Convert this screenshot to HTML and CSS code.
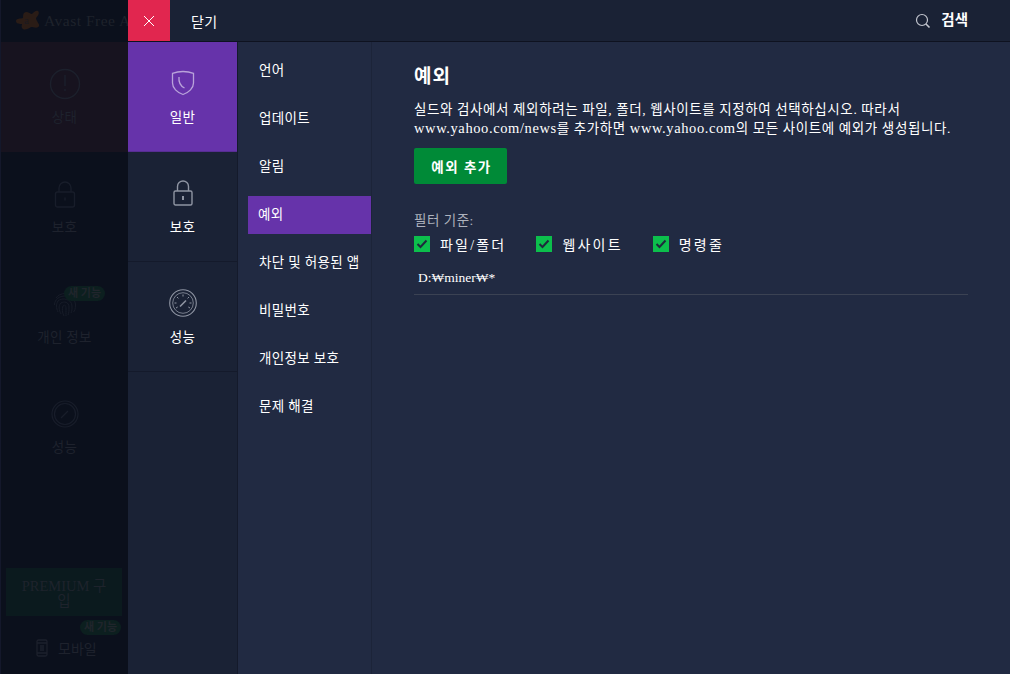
FILE: index.html
```html
<!DOCTYPE html>
<html lang="ko">
<head>
<meta charset="utf-8">
<title>Avast Free Antivirus</title>
<link rel="stylesheet" href="styles.css">
</head>
<body>
<div class="app">
  <aside class="rail">
    <div class="brand">
      <svg class="brand-logo" width="26" height="26" viewBox="0 0 26 26"><path d="M9 5c3-3 6 1 8 1 2-2 4-4 6-3 2 2 0 5-2 7 0 3 4 6 3 8-1 3-6 1-8 1-3 2-7 4-9 1-1-1 0-3 0-4-2 0-6 0-6-3 0-3 5-2 7-3 0-2 0-4 1-5z" fill="#2a1c16"/><text x="9" y="16" class="brand-a">a</text></svg>
      <span class="brand-name">Avast Free Antivirus</span>
    </div>
    <div class="rail-item rail-status">
      <svg width="32" height="32" viewBox="0 0 32 32" fill="none" stroke="#1c202c" stroke-width="1.4"><circle cx="16" cy="16" r="14.5"/><path d="M16 7v11M16 21v2"/></svg>
      <span>상태</span>
    </div>
    <div class="rail-item">
      <svg width="22" height="32" viewBox="0 0 22 32" fill="none" stroke="#181d2a" stroke-width="1.4"><path d="M5 14v-4a6 6 0 0 1 12 0v4"/><rect x="1.5" y="14" width="19" height="15" rx="2"/><path d="M11 19.500v3"/></svg>
      <span>보호</span>
    </div>
    <div class="rail-item">
      <svg width="24" height="32" viewBox="0 0 24 28" fill="none" stroke="#171c28" stroke-width="1"><path d="M3 8c4-6 14-6 18 0M1.500 15c0-12 21-12 21 0 0 4-1 6-2 7M5 22c-2-4-2-8 0-11 4-4 14-2 14 5 0 3 0 5-1 7M8 24c-2-4-3-8 0-11 3-2 8-1 8 4 0 3 0 6-1 8M11 26c-2-4-2-7-1-10 2-2 3 0 3 2 0 3 0 6 0 8"/></svg>
      <span>개인 정보</span>
      <b class="badge badge-privacy">새 기능</b>
    </div>
    <div class="rail-item">
      <svg width="28" height="32" viewBox="0 0 28 28" fill="none" stroke="#181d2a" stroke-width="1.2"><circle cx="14" cy="14" r="13"/><circle cx="14" cy="14" r="10.500"/><path d="M10 18l7-7"/></svg>
      <span>성능</span>
    </div>
    <div class="rail-bottom">
      <div class="premium">PREMIUM 구입</div>
      <div class="mobile">
        <svg width="12" height="18" viewBox="0 0 12 18" fill="none" stroke="#1c202c" stroke-width="1.300"><rect x="1" y="1" width="10" height="16" rx="1.500"/><path d="M1 4h10M1 14h10M4 7h4M4 9h4M4 11h4"/></svg>
        <span>모바일</span>
        <b class="badge badge-mobile">새 기능</b>
      </div>
    </div>
  </aside>

  <div class="panel">
    <header class="topbar">
      <button class="close" type="button" aria-label="닫기">
        <svg width="12" height="12" viewBox="0 0 12 12" fill="none" stroke="#fff" stroke-width="1"><path d="M1 1l10 10M11 1L1 11"/></svg>
      </button>
      <span class="close-label">닫기</span>
      <div class="search">
        <svg width="16" height="16" viewBox="0 0 16 16" fill="none" stroke="#c3c6cf" stroke-width="1.200"><circle cx="7" cy="7" r="5.500"/><path d="M11 11l3.500 3.500" stroke-width="1.600"/></svg>
        <strong>검색</strong>
      </div>
    </header>
    <div class="content">
      <nav class="cats">
        <a class="cat cat-active">
          <svg width="24" height="26" viewBox="0 0 24 26" fill="none" stroke="#b9a3da" stroke-width="1.300"><path d="M12 1.500c4 0 7.500.7 10.500 1.800v9.700c0 5-4.500 9.500-10.500 11.500C6 22.500 1.500 18 1.500 13V3.300C4.500 2.200 8 1.500 12 1.500z"/><path d="M8 7c-.5 5 1.500 9 5.500 11"/></svg>
          <span>일반</span>
        </a>
        <a class="cat">
          <svg width="20" height="26" viewBox="0 0 20 26" fill="none" stroke="#8f95a3" stroke-width="1.400"><path d="M4.500 11V6.500a5.500 5.500 0 0 1 11 0V11"/><rect x="1" y="11" width="18" height="14" rx="1.500"/><path d="M10 16v4" stroke-width="2"/></svg>
          <span>보호</span>
        </a>
        <a class="cat">
          <svg width="28" height="28" viewBox="0 0 28 28" fill="none" stroke="#8f95a3"><circle cx="14" cy="14" r="13.300" stroke-width="1.100"/><circle cx="14" cy="14" r="10.300" stroke-width=".8"/><path d="M14 5.500v2M8 8l1.400 1.400M20 8l-1.400 1.400M5.500 14h2M22.500 14h-2M7 19l1.700-1M21 19l-1.700-1" stroke-width="1"/><path d="M11 17.500l6-6" stroke-width="1.600"/></svg>
          <span>성능</span>
        </a>
      </nav>
      <nav class="subnav">
        <a class="sub">언어</a>
        <a class="sub">업데이트</a>
        <a class="sub">알림</a>
        <a class="sub sub-active">예외</a>
        <a class="sub">차단 및 허용된 앱</a>
        <a class="sub">비밀번호</a>
        <a class="sub">개인정보 보호</a>
        <a class="sub">문제 해결</a>
      </nav>
      <main class="main">
        <h1 class="title">예외</h1>
        <p class="desc">실드와 검사에서 제외하려는 파일, 폴더, 웹사이트를 지정하여 선택하십시오. 따라서<br><span class="lat">www.yahoo.com/news</span>를 추가하면 <span class="lat">www.yahoo.com</span>의 모든 사이트에 예외가 생성됩니다.</p>
        <button class="add" type="button">예외 추가</button>
        <div class="filter-label">필터 기준:</div>
        <div class="filters">
          <label class="check"><i class="box"><svg width="12" height="10" viewBox="0 0 12 10" fill="none" stroke="#1e2a3c" stroke-width="2"><path d="M1.500 5l3 3 6-6.500"/></svg></i>파일/폴더</label>
          <label class="check"><i class="box"><svg width="12" height="10" viewBox="0 0 12 10" fill="none" stroke="#1e2a3c" stroke-width="2"><path d="M1.500 5l3 3 6-6.500"/></svg></i>웹사이트</label>
          <label class="check"><i class="box"><svg width="12" height="10" viewBox="0 0 12 10" fill="none" stroke="#1e2a3c" stroke-width="2"><path d="M1.500 5l3 3 6-6.500"/></svg></i>명령줄</label>
        </div>
        <div class="entry">D:₩miner₩*</div>
      </main>
    </div>
  </div>
</div>
</body>
</html>
```
FILE: styles.css
```css
* { box-sizing: border-box; }
html, body { margin: 0; padding: 0; height: 100%; background: #0b101c; }
body {
  font-family: "Liberation Serif", "Noto Sans CJK KR", serif;
  font-size: 13.500px;
  color: #fff;
  overflow: hidden;
}
.app { display: flex; width: 1010px; height: 674px; }

/* dimmed application rail */
.rail {
  width: 128px;
  flex: none;
  display: flex;
  flex-direction: column;
  background: #0b101c;
  border-left: 1px solid #14182b;
  color: #1e222d;
  overflow: hidden;
}
.brand {
  height: 42px;
  flex: none;
  display: flex;
  align-items: center;
  gap: 3px;
  padding-left: 14px;
  white-space: nowrap;
}
.brand-logo { flex: none; }
.brand-a { font-size: 11px; fill: #1a1a20; }
.brand-name { font-size: 15.500px; color: #1e222b; letter-spacing: .5px; }
.rail-item {
  position: relative;
  height: 110px;
  flex: none;
  display: flex;
  flex-direction: column;
  align-items: center;
  padding-top: 26px;
  gap: 6px;
}
.rail-item svg { height: 32px; }
.rail-item span { letter-spacing: .3px; }
.rail-status { background: #17131f; }
.badge {
  position: absolute;
  font-size: 11px;
  line-height: 15px;
  padding: 0 4px;
  border-radius: 8px;
  background: #0c1f1f;
  color: #20252c;
  white-space: nowrap;
}
.badge-privacy { top: 24px; left: 63px; }
.badge-mobile { top: 4px; left: 79px; }
.rail-bottom { margin-top: auto; display: flex; flex-direction: column; }
.premium {
  width: 116px;
  height: 48px;
  margin: 0 0 0 5px;
  background: #0b1a1e;
  text-align: center;
  font-size: 14.500px;
  line-height: 15px;
  padding: 11px 12px 0;
  color: #1e232c;
}
.mobile {
  position: relative;
  display: flex;
  align-items: center;
  gap: 10px;
  height: 58px;
  padding: 5px 0 0 35px;
  font-size: 14px;
}

/* settings panel */
.panel { flex: 1; display: flex; flex-direction: column; min-width: 0; }
.topbar {
  height: 42px;
  flex: none;
  display: flex;
  align-items: center;
  background: #1a2235;
  border-bottom: 1px solid #0e1220;
}
.close {
  width: 42px;
  height: 41px;
  border: 0;
  padding: 0;
  background: #e1264f;
  display: flex;
  align-items: center;
  justify-content: center;
}
.close-label { margin-left: 21px; font-size: 14px; letter-spacing: .3px; }
.search {
  margin-left: auto;
  margin-right: 42px;
  display: flex;
  align-items: center;
  gap: 10px;
  font-size: 14.500px;
}
.search strong { position: relative; top: -2px; }
.content { flex: 1; display: flex; min-height: 0; }
.cats {
  width: 110px;
  flex: none;
  background: #1a2235;
  border-right: 1px solid #141a2b;
  display: flex;
  flex-direction: column;
}
.cat {
  height: 110px;
  flex: none;
  display: flex;
  flex-direction: column;
  align-items: center;
  padding-top: 27px;
  gap: 9px;
  border-bottom: 1px solid #141a2b;
  letter-spacing: .4px;
}
.cat svg { height: 28px; }
.cat-active { background: #6633aa; border-bottom-color: #572e92; }
.subnav {
  width: 134px;
  flex: none;
  background: #212a42;
  border-right: 1px solid #1c2439;
  padding: 10px 0 0 10px;
  display: flex;
  flex-direction: column;
  gap: 10px;
}
.sub {
  height: 38px;
  flex: none;
  display: flex;
  align-items: center;
  padding: 0 0 4px 11px;
  white-space: nowrap;
  letter-spacing: .35px;
}
.sub-active { background: #6633aa; padding-left: 10px; }
.main {
  flex: 1;
  background: #212a42;
  padding: 21px 42px 0;
  min-width: 0;
}
.title { margin: 0; font-size: 19px; line-height: 28px; font-weight: 700; letter-spacing: 1px; }
.desc { margin: 10px 0 0; line-height: 18px; white-space: nowrap; letter-spacing: .6px; }
.lat { font-size: 14.500px; }
.add {
  display: block;
  margin-top: 10px;
  width: 93px;
  height: 36px;
  border: 0;
  border-radius: 2px;
  background: #008a37;
  color: #fff;
  font: 700 13.500px "Liberation Serif", "Noto Sans CJK KR", serif;
  letter-spacing: 1.500px;
  padding: 0 0 0 2px;
}
.filter-label { margin-top: 28px; color: #aeb2bd; line-height: 18px; letter-spacing: .5px; }
.filters { display: flex; margin-top: 2px; height: 24px; align-items: center; }
.check { display: flex; align-items: center; gap: 10px; margin-right: 30px; font-size: 14px; letter-spacing: 2.200px; }
.box {
  width: 16px;
  height: 16px;
  background: #0cbf4c;
  display: flex;
  align-items: center;
  justify-content: center;
}
.entry {
  margin-top: 2px;
  height: 37px;
  padding: 11px 0 0 4px;
  border-bottom: 1px solid #3b4253;
  line-height: 18px;
}
```
